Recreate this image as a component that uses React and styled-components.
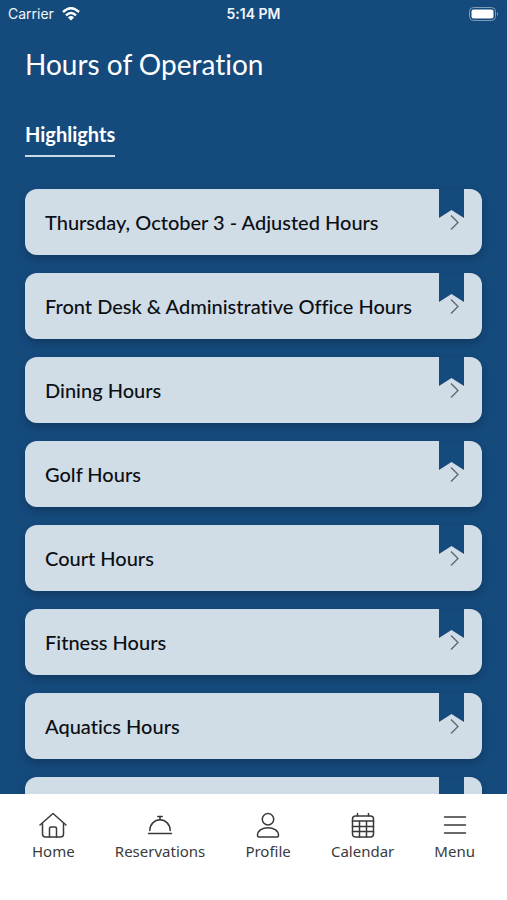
import React from 'react'
import styled, { createGlobalStyle } from 'styled-components';

const GlobalStyle = createGlobalStyle`
  * {
    box-sizing: border-box;
  }

  body {
    margin: 0;
    background-color: #154a7d;
    font-family: Lato, "Liberation Sans", sans-serif;
    font-variant-ligatures: none;
  }
`;

const Screen = styled.div`
  height: 100vh;
  display: flex;
  flex-direction: column;
  background-color: #154a7d;
`;

const StatusBar = styled.header`
  display: grid;
  grid-template-columns: 1fr auto 1fr;
  align-items: center;
  height: 27px;
  padding: 0 8px;
  color: #f1f6fb;
  font-family: Inter, "Liberation Sans", sans-serif;
  font-size: 14px;
`;

const Carrier = styled.div`
  display: flex;
  align-items: center;
  gap: 8px;
`;

const Time = styled.div`
  font-weight: 600;
`;

const Battery = styled.svg`
  justify-self: end;
`;

const Content = styled.main`
  flex: 1;
  min-height: 0;
  overflow-y: auto;
  scrollbar-width: none;
  padding: 18px 25px;
`;

const Title = styled.h1`
  margin: 0;
  color: white;
  font-size: 28px;
  font-weight: 400;
  line-height: 38px;
`;

const Tabs = styled.div`
  display: flex;
  margin: 32px 0;
`;

const Tab = styled.button`
  height: 42px;
  padding: 0 0 2px;
  background: none;
  border: none;
  border-bottom: 2px solid #c9d9e8;
  color: white;
  font-family: inherit;
  font-size: 20px;
  font-weight: 700;
  cursor: pointer;
`;

const List = styled.ul`
  display: flex;
  flex-direction: column;
  gap: 18px;
  margin: 0;
  padding: 0;
  list-style: none;
`;

const Card = styled.button`
  position: relative;
  display: flex;
  align-items: center;
  justify-content: space-between;
  width: 100%;
  height: 66px;
  padding: 0 23px 0 20px;
  background-color: #d0dce6;
  border: none;
  border-radius: 12px;
  box-shadow: 0 4px 8px rgba(0, 0, 0, 0.22);
  color: #0b0f14;
  font-family: inherit;
  font-size: 20px;
  font-weight: 500;
  font-variant-ligatures: none;
  text-align: left;
  cursor: pointer;
`;

const Ribbon = styled.span`
  position: absolute;
  top: 0;
  right: 18px;
  width: 25px;
  height: 29px;
  background-color: #154a7d;
  clip-path: polygon(0 0, 100% 0, 100% 100%, 50% 72%, 0 100%);
`;

const BottomNav = styled.nav`
  display: flex;
  justify-content: space-between;
  height: 106px;
  padding: 17px 32px 0;
  background-color: white;
`;

const NavLink = styled.a`
  display: flex;
  flex-direction: column;
  align-items: center;
  gap: 1px;
  color: #3a3a3c;
  font-family: "Noto Sans", sans-serif;
  font-size: 15px;
  line-height: 22px;
  text-decoration: none;
`;

const Icon = styled.svg`
  width: 28px;
  height: 28px;
  fill: none;
  stroke: #3a3a3c;
  stroke-width: 1.5;
  stroke-linecap: round;
  stroke-linejoin: round;
`;

const hours = [
  'Thursday, October 3 - Adjusted Hours',
  'Front Desk & Administrative Office Hours',
  'Dining Hours',
  'Golf Hours',
  'Court Hours',
  'Fitness Hours',
  'Aquatics Hours',
  '',
];

const links = [
  {
    label: 'Home',
    icon: (
      <>
        <path d="M1 14 L14 2.5 L27 14" />
        <path d="M3.5 12.5 V23 Q3.5 26 6.5 26 H21.5 Q24.5 26 24.5 23 V12.5" />
        <path d="M10.5 26 V17.5 Q10.5 16 12 16 H16 Q17.5 16 17.5 17.5 V26" />
      </>
    ),
  },
  {
    label: 'Reservations',
    icon: (
      <>
        <path d="M2.5 22.5 H25.5" />
        <path d="M3.8 19.5 A10.2 10.8 0 0 1 24.2 19.5" />
        <path d="M14 8.700 V6 M11.8 5.5 H16.2" />
      </>
    ),
  },
  {
    label: 'Profile',
    icon: (
      <>
        <circle cx="14" cy="8.2" r="5.7" />
        <path d="M5 26 Q3.5 26 3.5 24.5 C3.5 14 24.5 14 24.5 24.5 Q24.5 26 23 26 Z" />
      </>
    ),
  },
  {
    label: 'Calendar',
    icon: (
      <>
        <rect x="3.5" y="5" width="21" height="21" rx="3" />
        <path d="M8.5 2.5 V5 M19.5 2.5 V5" />
        <path d="M3.5 10 H24.5 M3.5 15.5 H24.5 M3.5 20.5 H24.5 M10.5 10 V26 M17.5 10 V26" />
      </>
    ),
  },
  {
    label: 'Menu',
    icon: <path d="M3.5 6 H24.5 M3.5 14 H24.5 M3.5 22 H24.5" />,
  },
];

function WifiIcon() {
  return (
    <svg width="18" height="14" viewBox="0 0 18 14" fill="none" stroke="white" strokeWidth="2.4" aria-hidden="true">
      <path d="M1 5 Q9 -2.5 17 5" />
      <path d="M4 8.3 Q9 3.6 14 8.3" />
      <path d="M9 13.5 L5.9 10.4 Q9 7.8 12.1 10.4 Z" fill="white" stroke="none" />
    </svg>
  )
}

function BatteryIcon() {
  return (
    <Battery width="30" height="14" viewBox="0 0 30 14" aria-hidden="true">
      <rect x="0.5" y="0.5" width="26" height="13" rx="4" fill="none" stroke="#7f9cb9" />
      <rect x="2.5" y="2.5" width="22" height="9" rx="2" fill="white" />
      <path d="M28 5 Q30 7 28 9 Z" fill="#7f9cb9" />
    </Battery>
  )
}

function Chevron() {
  return (
    <svg width="9" height="16" viewBox="0 0 9 16" fill="none" stroke="#5d666f" strokeWidth="1.3" aria-hidden="true">
      <path d="M1 1.5 L8 8.5 L1 15.5" />
    </svg>
  )
}

function App() {
  return (
    <Screen>
      <GlobalStyle />
      <StatusBar>
        <Carrier>
          Carrier
          <WifiIcon />
        </Carrier>
        <Time>5:14 PM</Time>
        <BatteryIcon />
      </StatusBar>
      <Content>
        <Title>Hours of Operation</Title>
        <Tabs>
          <Tab>Highlights</Tab>
        </Tabs>
        <List>
          {hours.map((name, index) => (
            <li key={index}>
              <Card>
                {name}
                <Ribbon />
                {name && <Chevron />}
              </Card>
            </li>
          ))}
        </List>
      </Content>
      <BottomNav>
        {links.map(({ label, icon }) => (
          <NavLink key={label} href="#">
            <Icon viewBox="0 0 28 28" aria-hidden="true">{icon}</Icon>
            {label}
          </NavLink>
        ))}
      </BottomNav>
    </Screen>
  )
}

export default App
